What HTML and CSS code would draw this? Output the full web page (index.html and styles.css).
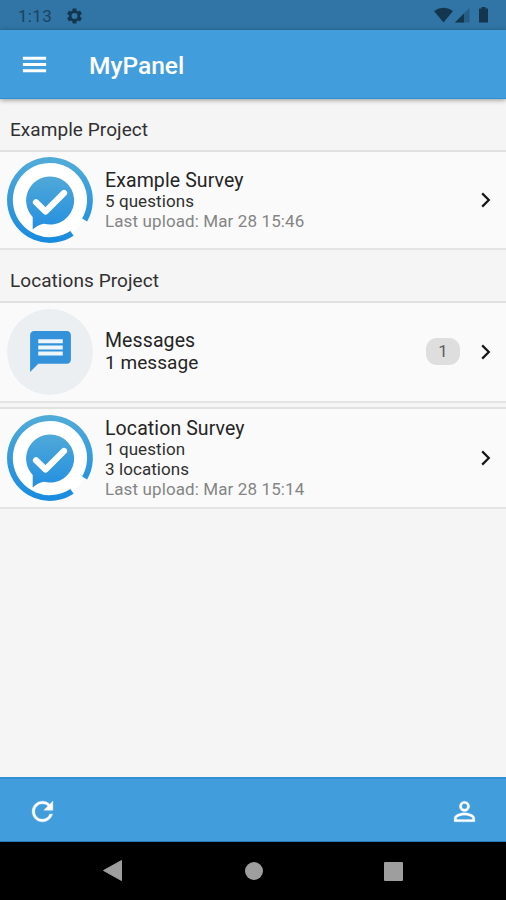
FILE: index.html
```html
<!DOCTYPE html>
<html lang="en">
<head>
<meta charset="utf-8">
<title>MyPanel</title>
<link rel="stylesheet" href="styles.css">
</head>
<body>
<svg class="defs" width="0" height="0">
  <defs>
    <linearGradient id="ring" gradientUnits="userSpaceOnUse" x1="0" y1="0" x2="0" y2="86"><stop offset="0" stop-color="#52acd8"/><stop offset="1" stop-color="#188be0"/></linearGradient>
    <linearGradient id="bubble" gradientUnits="userSpaceOnUse" x1="0" y1="19" x2="0" y2="72"><stop offset="0" stop-color="#50a9d8"/><stop offset="1" stop-color="#248fe0"/></linearGradient>
    <symbol id="logo" viewBox="0 0 86 86">
      <circle cx="43" cy="43" r="40" fill="#fff"/>
      <path d="M65 76.4A40 40 0 1 1 77.6 63" fill="none" stroke="url(#ring)" stroke-width="5.8"/>
      <path d="M43 19.5a24 24 0 1 1-6 47.2Q30.500 68 25.700 72.500V60A24 24 0 0 1 43 19.500Z" fill="url(#bubble)"/>
      <path d="M29 45.300L38.500 54.500L57 36" fill="none" stroke="#fff" stroke-width="6.200" stroke-linecap="round" stroke-linejoin="round"/>
    </symbol>
    <symbol id="chevron" viewBox="0 0 10 16"><path d="M1.200 1.400L7.800 8L1.200 14.600" fill="none" stroke="#151515" stroke-width="2.200"/></symbol>
  </defs>
</svg>
<div class="screen">
  <div class="status">
    <span class="clock">1:13</span>
    <svg class="gear" viewBox="2 2 20 20"><path fill="#14354e" fill-rule="evenodd" d="M19.430 12.980c.040-.320.070-.640.070-.980s-.030-.660-.070-.980l2.110-1.650c.190-.150.240-.420.120-.640l-2-3.460c-.120-.220-.390-.300-.610-.220l-2.490 1c-.520-.400-1.080-.730-1.690-.980l-.380-2.650C14.460 2.180 14.250 2 14 2h-4c-.250 0-.460.180-.490.420l-.380 2.650c-.610.250-1.170.590-1.690.980l-2.490-1c-.230-.090-.490 0-.610.220l-2 3.460c-.130.220-.070.490.120.640l2.110 1.650c-.040.320-.070.650-.070.980s.030.660.070.980l-2.110 1.650c-.190.150-.240.420-.120.640l2 3.460c.120.220.390.300.610.220l2.490-1c.520.400 1.080.730 1.690.980l.380 2.650c.030.240.240.420.490.420h4c.250 0 .460-.180.490-.420l.380-2.650c.610-.250 1.170-.590 1.690-.980l2.490 1c.230.090.490 0 .610-.220l2-3.460c.120-.220.070-.490-.120-.640zM12 16a4 4 0 1 1 0-8a4 4 0 0 1 0 8z"/></svg>
    <svg class="signals" viewBox="0 0 56 17"><g fill="#14354e"><path d="M0 4Q9.500-2.500 19 4L9.500 15.500Z"/><path opacity=".35" d="M21 15.500L35.500 1V15.500Z"/><path d="M21 15.500L30 6.500V15.500Z"/><path d="M47.500 0h4v1.500H54V15.500h-9V1.500h2.500Z"/></g></svg>
  </div>
  <header class="appbar">
    <svg class="icon" viewBox="0 0 24 24"><path fill="#fff" d="M3 18h18v-2.300H3v2.300zm0-4.850h18v-2.300H3v2.300zM3 6v2.300h18V6H3z"/></svg>
    <h1>MyPanel</h1>
  </header>
  <main>
    <h2 class="first">Example Project</h2>
    <section class="row">
      <svg class="avatar"><use href="#logo"/></svg>
      <div class="body"><p class="name">Example Survey</p><p class="info">5 questions</p><p class="info muted">Last upload: Mar 28 15:46</p></div>
      <svg class="chevron"><use href="#chevron"/></svg>
    </section>
    <h2>Locations Project</h2>
    <section class="row messages">
      <div class="avatar round"><svg viewBox="0 0 24 24"><path fill="#3492da" d="M20 2H4c-1.100 0-1.990.900-1.990 2L2 22l4-4h14c1.100 0 2-.900 2-2V4c0-1.100-.900-2-2-2z"/><path fill="#eef6fc" d="M6 6h12v2H6zM6 9h12v2H6zM6 12h12v2H6z"/></svg></div>
      <div class="body"><p class="name">Messages</p><p class="name count">1 message</p></div>
      <span class="badge">1</span>
      <svg class="chevron"><use href="#chevron"/></svg>
    </section>
    <section class="row survey">
      <svg class="avatar"><use href="#logo"/></svg>
      <div class="body"><p class="name">Location Survey</p><p class="info">1 question</p><p class="info">3 locations</p><p class="info muted">Last upload: Mar 28 15:14</p></div>
      <svg class="chevron"><use href="#chevron"/></svg>
    </section>
  </main>
  <footer class="toolbar">
    <svg class="icon" viewBox="0 0 24 24"><path fill="#fff" stroke="#fff" stroke-width=".3" d="M17.650 6.350C16.200 4.900 14.210 4 12 4c-4.420 0-7.990 3.580-7.990 8s3.570 8 7.990 8c3.730 0 6.840-2.550 7.730-6h-2.080c-.820 2.330-3.040 4-5.650 4-3.310 0-6-2.690-6-6s2.690-6 6-6c1.660 0 3.140.690 4.220 1.780L13 11h7V4l-2.350 2.350z"/></svg>
    <svg class="icon" viewBox="0 0 24 24"><path fill="#fff" stroke="#fff" stroke-width=".2" fill-rule="evenodd" d="M12 4a4 4 0 1 1 0 8a4 4 0 0 1 0-8zM12 5.900a2.100 2.100 0 1 0 0 4.200a2.100 2.100 0 0 0 0-4.200zM12 13c2.670 0 8 1.340 8 4v3H4v-3c0-2.660 5.330-4 8-4zM12 14.900c-2.970 0-6.100 1.460-6.100 2.100v1.100h12.200V17c0-.640-3.130-2.100-6.100-2.100z"/></svg>
  </footer>
  <nav class="nav">
    <svg viewBox="0 0 20 22"><path fill="#9e9e9e" d="M18.500.500V20.500L.500 10.500Z" stroke="#9e9e9e" stroke-linejoin="round"/></svg>
    <i class="home"></i>
    <i class="recent"></i>
  </nav>
</div>
</body>
</html>
```
FILE: styles.css
```css
* { box-sizing: border-box; }
body { margin: 0; font-family: Roboto, "Liberation Sans", sans-serif; color: #303030; }
h1, h2, p { margin: 0; font-weight: 400; white-space: nowrap; }
svg { display: block; flex: none; }
.defs { position: absolute; }
.screen { width: 506px; height: 900px; display: flex; flex-direction: column; background: #f5f5f5; overflow: hidden; }
.status { height: 30px; flex: none; background: #3075a5; display: flex; align-items: center; padding: 1px 16px 0 18px; }
.clock { width: 49px; font-size: 17px; color: #1b4361; letter-spacing: .3px; }
.gear { width: 15px; height: 16px; }
.signals { width: 56px; height: 17px; margin-left: auto; }
.appbar { height: 69px; flex: none; background: #429ddd; border-bottom: 1px solid #2f8fd0; box-shadow: 0 1px 5px rgba(0,0,0,.4); display: flex; align-items: center; padding: 1px 20px 0 19px; z-index: 1; }
.icon { width: 31px; height: 31px; }
.appbar h1 { margin: 1px 0 0 39px; font-size: 24.500px; font-weight: 500; color: #fff; }
main { flex: 1; }
h2 { height: 51px; padding-left: 10px; font-size: 19px; line-height: 62px; letter-spacing: .06px; }
.row { height: 100px; background: #fafafa; border-top: 2px solid #e1e1e1; border-bottom: 2px solid #e4e4e4; display: flex; align-items: center; padding: 0 15px 0 7px; }
.row.messages { height: 102px; }
.row.messages .body { padding: 0 0 1px; }
.row.survey { height: 102px; margin-top: 4px; }
.avatar { width: 86px; height: 86px; flex: none; }
.round { border-radius: 50%; background: #eceff1; display: flex; align-items: center; justify-content: center; }
.round svg { width: 49px; height: 49px; margin-top: -2px; }
.body { margin-left: 12px; flex: 1; padding-top: 2px; }
.name { font-size: 19.500px; line-height: 22px; letter-spacing: .1px; color: #252525; }
.name.count { font-size: 19px; letter-spacing: .05px; }
.info { font-size: 17px; line-height: 19.700px; letter-spacing: .08px; color: #303030; }
.muted { color: #858585; letter-spacing: .11px; }
.badge { width: 34px; height: 27px; margin: 0 21px 1px 0; border-radius: 11px; background: #dedede; color: #606060; font-size: 17px; line-height: 27px; text-align: center; }
.chevron { width: 10px; height: 16px; }
.toolbar { height: 65px; flex: none; background: #429ddd; border-top: 2px solid #3190d3; border-bottom: 1px solid #2878af; display: flex; align-items: center; justify-content: space-between; padding: 3px 26px 0 27px; }
.nav { height: 58px; flex: none; background: #000; display: flex; align-items: center; justify-content: space-between; padding: 0 103px; }
.nav svg { width: 20px; height: 22px; }
.home { width: 18px; height: 18px; border-radius: 50%; background: #9e9e9e; }
.recent { width: 19px; height: 19px; border-radius: 1px; background: #9e9e9e; }
```
